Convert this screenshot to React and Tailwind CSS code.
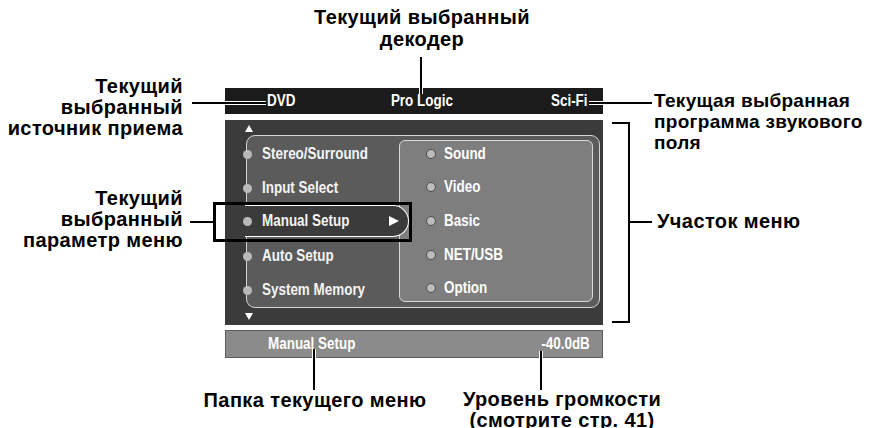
import React from "react";

const cond = "inline-block scale-x-[0.84] origin-left whitespace-nowrap";

function Up() {
  return (
    <svg width="8" height="7" viewBox="0 0 8 7" className="block">
      <polygon points="4,0 8,7 0,7" fill="#ffffff" />
    </svg>
  );
}
function Down() {
  return (
    <svg width="8" height="7" viewBox="0 0 8 7" className="block">
      <polygon points="0,0 8,0 4,7" fill="#ffffff" />
    </svg>
  );
}

function LeftRow({ label }) {
  return (
    <div className="h-[34px] flex items-center">
      <span className="w-[9px] h-[9px] rounded-full bg-[#b9b9b9] -ml-[4px] shrink-0" />
      <span className={`ml-[10px] ${cond}`}>{label}</span>
    </div>
  );
}

function SubRow({ label }) {
  return (
    <div className="h-[26px] flex items-center pl-[26px]">
      <span className="w-[10px] h-[10px] rounded-full bg-[#bcbcbc] border border-[#4a4a4a] shrink-0" />
      <span className={`ml-[8px] ${cond}`}>{label}</span>
    </div>
  );
}

export default function App() {
  const note = "absolute font-bold text-[20px] leading-[21px] tracking-[0.4px] text-black whitespace-nowrap";
  return (
    <div className="relative w-[874px] h-[428px] bg-white overflow-hidden font-['Liberation_Sans',Arial,sans-serif]">
      {/* screen */}
      <div className="pt-[88px] pl-[225px]">
        <div className="w-[378px] flex flex-col font-bold text-[16px] text-white">
          <div className="h-[26px] bg-[#1b1b1b] flex items-center">
            <div className="w-[150px] pl-[42px]">
              <span className={cond}>DVD</span>
            </div>
            <div className="w-[94px] text-center">
              <span className="inline-block scale-x-[0.84] origin-center whitespace-nowrap">Pro Logic</span>
            </div>
            <div className="flex-1 text-right pr-[15px]">
              <span className="inline-block scale-x-[0.84] origin-right whitespace-nowrap">Sci-Fi</span>
            </div>
          </div>
          <div className="mt-[6px] h-[205px] bg-[#3b3b3b] flex flex-col pt-[5px]">
            <div className="h-[7px] pl-[20px]"><Up /></div>
            <div className="mt-[3px] ml-[21px] w-[354px] h-[173px] rounded-[9px] border border-[#d4d4d4] bg-[#5b5b5b] flex">
              <div className="w-[152px] pt-[1px] flex flex-col text-[#f4f4f4]">
                <LeftRow label="Stereo/Surround" />
                <LeftRow label="Input Select" />
                <div className="h-[34px] flex items-start">
                  <div className="relative z-10 -ml-[2px] w-[164px] shrink-0 h-[32px] rounded-r-[16px] border-y border-r border-white bg-[#3b3b3b] flex items-center">
                    <span className="w-[9px] h-[9px] rounded-full bg-[#b9b9b9] -ml-[2px] shrink-0" />
                    <span className={`ml-[10px] ${cond}`}>Manual Setup</span>
                    <svg width="10" height="10" viewBox="0 0 10 10" className="ml-auto mr-[9px] shrink-0">
                      <polygon points="0,0 10,5 0,10" fill="#ffffff" />
                    </svg>
                  </div>
                </div>
                <LeftRow label="Auto Setup" />
                <LeftRow label="System Memory" />
              </div>
              <div className="mt-[4px] w-[194px] h-[162px] rounded-[6px] border border-[#d8d8d8] bg-[#7e7e7e] flex flex-col gap-[8px]">
                <SubRow label="Sound" />
                <SubRow label="Video" />
                <SubRow label="Basic" />
                <SubRow label="NET/USB" />
                <SubRow label="Option" />
              </div>
            </div>
            <div className="mt-[5px] h-[7px] pl-[20px]"><Down /></div>
          </div>
          <div className="mt-[5px] h-[28px] bg-[#8b8b8b] border border-[#5e5e5e] flex items-center justify-between pl-[42px] pr-[12px]">
            <span className={cond}>Manual Setup</span>
            <span className="inline-block scale-x-[0.84] origin-right whitespace-nowrap">-40.0dB</span>
          </div>
        </div>
      </div>

      {/* selection box */}
      <div className="absolute left-[213px] top-[202px] w-[199px] h-[40px] border-[3px] border-black" />

      {/* leader lines */}
      <div className="absolute left-[419px] top-[57px] w-[4px] h-[37px] bg-black border-x border-white" />
      <div className="absolute left-[192px] top-[101px] w-[74px] h-[4px] bg-black border-y border-white" />
      <div className="absolute left-[589px] top-[101px] w-[63px] h-[4px] bg-black border-y border-white" />
      <div className="absolute left-[612px] top-[122px] w-[18px] h-[201px] border-[2px] border-l-0 border-black" />
      <div className="absolute left-[628px] top-[221px] w-[24px] h-[2px] bg-black" />
      <div className="absolute left-[190px] top-[221px] w-[23px] h-[2px] bg-black" />
      <div className="absolute left-[312px] top-[349px] w-[4px] h-[41px] bg-black border-x border-white" />
      <div className="absolute left-[539px] top-[351px] w-[4px] h-[39px] bg-black border-x border-white" />

      {/* notes */}
      <div className={`${note} left-[272px] w-[300px] top-[6px] leading-[22px] text-center`}>
        Текущий выбранный<br />декодер
      </div>
      <div className={`${note} right-[691px] top-[76px] text-right`}>
        Текущий<br />выбранный<br />источник приема
      </div>
      <div className="absolute left-[654px] top-[90px] font-bold text-[19px] leading-[21px] tracking-[0.3px] text-black whitespace-nowrap">
        Текущая выбранная<br />программа звукового<br />поля
      </div>
      <div className={`${note} left-[657px] top-[211px]`}>Участок меню</div>
      <div className={`${note} right-[691px] top-[188px] text-right`}>
        Текущий<br />выбранный<br />параметр меню
      </div>
      <div className={`${note} left-[165px] w-[300px] top-[390px] text-center`}>Папка текущего меню</div>
      <div className={`${note} left-[412px] w-[300px] top-[389px] text-center`}>
        Уровень громкости<br />(смотрите стр. 41)
      </div>
    </div>
  );
}
